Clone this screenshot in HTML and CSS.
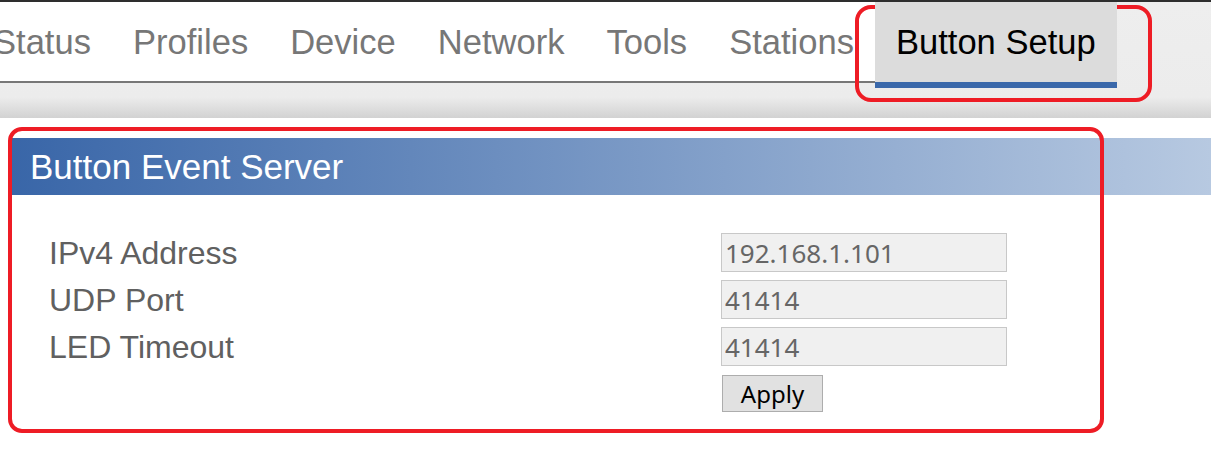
FILE: index.html
```html
<!DOCTYPE html>
<html>
<head>
<meta charset="utf-8">
<link rel="stylesheet" href="styles.css">
</head>
<body>
<div class="top">
  <ul class="tabs">
    <li class="tab">Status</li>
    <li class="tab">Profiles</li>
    <li class="tab">Device</li>
    <li class="tab">Network</li>
    <li class="tab">Tools</li>
    <li class="tab">Stations</li>
    <li class="tab active">Button Setup</li>
  </ul>
</div>
<div class="panel">
  <div class="panel-head">Button Event Server</div>
  <div class="panel-body">
    <div class="label">IPv4 Address</div>
    <input class="field" type="text" value="192.168.1.101">
    <div class="label">UDP Port</div>
    <input class="field" type="text" value="41414">
    <div class="label">LED Timeout</div>
    <input class="field" type="text" value="41414">
    <div></div>
    <div><button class="apply">Apply</button></div>
  </div>
</div>
<div class="mark mark-tab"></div>
<div class="mark mark-panel"></div>
</body>
</html>
```

FILE: styles.css
```css
html, body {
  margin: 0;
  padding: 0;
  background: #ffffff;
  font-family: "Liberation Sans", Arial, sans-serif;
  overflow: hidden;
}

.top {
  border-top: 2px solid #2e2e2e;
  height: 116px;
  background: linear-gradient(to bottom, #eeeeee 0%, #ececec 82%, #d2d2d2 100%);
}

.tabs {
  list-style: none;
  margin: 0 0 0 -28px;
  padding: 0;
  display: flex;
  width: fit-content;
  height: 79px;
  background: #ffffff;
  border-bottom: 2px solid #777777;
}

.tab {
  padding: 20px 21px 0;
  font-size: 34.55px;
  line-height: 40px;
  color: #777777;
  white-space: nowrap;
}

.tab.active {
  align-self: flex-start;
  height: 60px;
  background: #dcdcdc;
  color: #000000;
  border-bottom: 6px solid #3a68aa;
  position: relative;
  z-index: 1;
}

.panel {
  margin: 20px 0 0 11px;
}

.panel-head {
  height: 57px;
  box-sizing: border-box;
  padding: 9px 0 0 19px;
  background: linear-gradient(to right, #3966a8 0%, #b7c9e1 100%);
  color: #ffffff;
  font-size: 35px;
  line-height: 40px;
}

.panel-body {
  display: grid;
  grid-template-columns: 672px 286px;
  row-gap: 8px;
  align-items: center;
  padding: 38px 0 0 38px;
}

.label {
  font-size: 32px;
  color: #606060;
  line-height: 36px;
}

.field {
  box-sizing: border-box;
  width: 286px;
  height: 39px;
  margin: 0;
  padding: 0 0 0 3px;
  border: 1px solid #c8c8c8;
  background: #f0f0f0;
  font-family: "Noto Sans", sans-serif;
  font-size: 26px;
  color: #666666;
  outline: none;
}

.apply {
  box-sizing: border-box;
  width: 101px;
  height: 37px;
  margin: 1px 0 0 1px;
  padding: 0;
  border: 1px solid #adadad;
  background: #e1e1e1;
  font-family: "Noto Sans", sans-serif;
  font-size: 24px;
  color: #000000;
  line-height: 33px;
}

.mark {
  position: absolute;
  box-sizing: border-box;
  border: 4px solid #ee1c25;
}

.mark-tab {
  left: 855px;
  top: 5px;
  width: 297px;
  height: 97px;
  border-radius: 16px;
}

.mark-panel {
  left: 8px;
  top: 127px;
  width: 1096px;
  height: 306px;
  border-radius: 14px;
}
```
